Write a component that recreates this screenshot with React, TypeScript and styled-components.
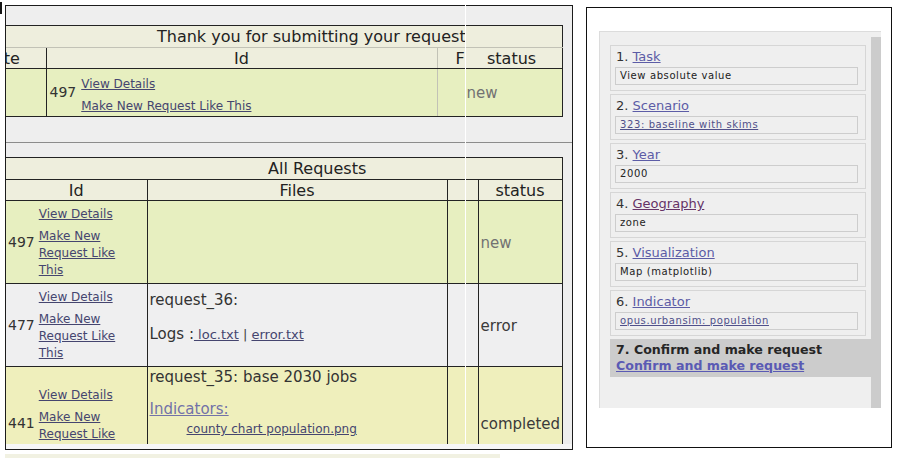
import React from "react";
import styled, { createGlobalStyle } from "styled-components";

const GlobalStyle = createGlobalStyle`
  html, body { margin: 0; padding: 0; background: #ffffff; }
  body { font-family: "DejaVu Sans", Verdana, sans-serif; color: #222222; }
  #root { width: 904px; height: 461px; overflow: hidden; }
`;

type Tone = "dark" | "light" | "none";
const edge = (t: Tone = "dark") =>
  t === "none" ? "none" : `1px solid ${t === "dark" ? "#232323" : "#c2c2b6"}`;

const Page = styled.div`
  display: flex;
  align-items: flex-start;
`;

const CornerMark = styled.div`
  width: 2px;
  height: 12px;
  margin-top: 2px;
  background: #151515;
`;

const LeftColumn = styled.div`
  display: flex;
  flex-direction: column;
  margin-left: 3px;
  margin-top: 5px;
`;

const RequestsPanel = styled.div`
  position: relative;
  box-sizing: border-box;
  width: 568px;
  height: 445px;
  border: 1px solid #1c1c1c;
  background: #f6f6f6;
  padding-bottom: 5px;
`;

const Scroller = styled.div`
  box-sizing: border-box;
  height: 100%;
  overflow: hidden;
  background: #eeeeee;
  padding-top: 19px;
`;

const Seam = styled.div`
  position: absolute;
  top: -6px;
  bottom: 5px;
  left: 459px;
  width: 1px;
  background: #ffffff;
`;

const Grid = styled.table<{ $w: number; $shift?: number }>`
  border-collapse: collapse;
  table-layout: fixed;
  width: ${(p) => p.$w}px;
  margin-left: ${(p) => p.$shift ?? 0}px;
`;

const Col = styled.col<{ $w: number }>`
  width: ${(p) => p.$w}px;
`;

const TitleCell = styled.th<{ $indent: number; $under: Tone }>`
  box-sizing: border-box;
  height: 22px;
  padding: 0 0 0 ${(p) => p.$indent}px;
  background: #eeeedd;
  border-top: ${edge("dark")};
  border-right: ${edge("dark")};
  border-bottom: ${(p) => edge(p.$under)};
  font-size: 16px;
  font-weight: normal;
  line-height: 20px;
  text-align: left;
  white-space: nowrap;
  overflow: hidden;
  color: #222222;
`;

const HeadCell = styled.th<{ $right?: Tone; $align?: "left" | "center"; $indent?: number }>`
  box-sizing: border-box;
  height: 21px;
  padding: 0 0 0 ${(p) => p.$indent ?? 0}px;
  background: #eeeedd;
  border-right: ${(p) => edge(p.$right)};
  border-bottom: ${edge("dark")};
  font-size: 16px;
  font-weight: normal;
  line-height: 19px;
  text-align: ${(p) => p.$align ?? "center"};
  white-space: nowrap;
  overflow: hidden;
  color: #222222;
`;

const BodyCell = styled.td<{
  $bg: string;
  $right?: Tone;
  $h: number;
  $valign?: "top" | "middle";
  $pl?: number;
  $pt?: number;
}>`
  box-sizing: border-box;
  height: ${(p) => p.$h}px;
  padding: ${(p) => p.$pt ?? 0}px 0 0 ${(p) => p.$pl ?? 0}px;
  background: ${(p) => p.$bg};
  border-right: ${(p) => edge(p.$right)};
  border-bottom: ${edge("dark")};
  vertical-align: ${(p) => p.$valign ?? "middle"};
  color: #333333;
  overflow: hidden;
`;

const IdWrap = styled.div<{ $gap: number }>`
  display: flex;
  align-items: center;
  gap: ${(p) => p.$gap}px;
`;

const IdNumber = styled.span`
  font-size: 14px;
  line-height: 17px;
  color: #333333;
`;

const LinkStack = styled.div<{ $w?: number; $offset?: number }>`
  display: flex;
  flex-direction: column;
  align-items: flex-start;
  width: ${(p) => (p.$w ? `${p.$w}px` : "auto")};
  margin-top: ${(p) => p.$offset ?? 0}px;
  font-size: 12px;
  line-height: 17px;
`;

const ActionLink = styled.a<{ $lead?: boolean }>`
  color: #45456f;
  text-decoration: underline;
  cursor: pointer;
  margin-bottom: ${(p) => (p.$lead ? 5 : 0)}px;
`;

const StatusText = styled.span<{ $muted?: boolean }>`
  font-size: 15px;
  line-height: 18px;
  color: ${(p) => (p.$muted ? "#727272" : "#3a3a3a")};
`;

const FileLine = styled.div<{ $gap?: number }>`
  font-size: 15px;
  line-height: 18px;
  color: #333333;
  margin-top: ${(p) => p.$gap ?? 0}px;
  white-space: nowrap;
`;

const FileLink = styled.a`
  font-size: 13px;
  color: #45456f;
  text-decoration: underline;
  cursor: pointer;
`;

const Separator = styled.span`
  font-size: 13px;
  color: #444444;
`;

const IndicatorLabel = styled.a`
  font-size: 15px;
  color: #7272a8;
  text-decoration: underline;
  cursor: pointer;
`;

const IndicatorFile = styled.a`
  display: block;
  margin-left: 37px;
  margin-top: 4px;
  font-size: 12px;
  line-height: 15px;
  color: #45456f;
  text-decoration: underline;
  cursor: pointer;
`;

const Rule = styled.div`
  height: 1px;
  background: #8c8c8c;
  margin: 25px 0 14px;
`;

const FooterStrip = styled.div`
  width: 495px;
  height: 4px;
  margin-top: 4px;
  background: #f1f1e2;
`;

/* ---------- right panel ---------- */

const WizardBox = styled.div`
  box-sizing: border-box;
  width: 306px;
  height: 441px;
  margin-left: 13px;
  margin-top: 7px;
  border: 1px solid #111111;
  background: #ffffff;
  padding: 23px 0 0 12px;
`;

const Wizard = styled.div`
  box-sizing: border-box;
  width: 282px;
  height: 377px;
  display: flex;
  align-items: stretch;
  padding-left: 10px;
  background: #efefef;
  border-top: 1px solid #dcdcdc;
  border-left: 1px solid #dcdcdc;
`;

const Steps = styled.div`
  width: 261px;
  padding-top: 13px;
  display: flex;
  flex-direction: column;
  gap: 3px;
`;

const ShadowBar = styled.div`
  width: 10px;
  margin-top: 5px;
  background: #cccccc;
`;

const Step = styled.div`
  box-sizing: border-box;
  width: 256px;
  height: 46px;
  padding: 3px 7px 5px 4px;
  border: 1px solid #d6d6d6;
  background: #efefef;
`;

const StepTitle = styled.div`
  padding-left: 1px;
  margin-bottom: 2px;
  font-size: 13px;
  line-height: 16px;
  color: #333333;
  white-space: nowrap;
`;

const StepLink = styled.a<{ $visited?: boolean }>`
  color: ${(p) => (p.$visited ? "#663366" : "#5c5ca6")};
  text-decoration: underline;
  cursor: pointer;
`;

const StepValue = styled.div`
  box-sizing: border-box;
  height: 18px;
  padding-left: 4px;
  border: 1px solid #cdcdcd;
  background: #efefef;
  font-size: 10px;
  line-height: 16px;
  letter-spacing: 0.6px;
  color: #222222;
  white-space: nowrap;
  overflow: hidden;
`;

const ValueLink = styled.a`
  color: #50508a;
  text-decoration: underline;
  cursor: pointer;
`;

const ConfirmBlock = styled.div`
  box-sizing: border-box;
  width: 261px;
  padding: 3px 6px;
  background: #cccccc;
  font-size: 12.6px;
  font-weight: bold;
  line-height: 16px;
  color: #262626;
  white-space: nowrap;
`;

const ConfirmLink = styled.a`
  display: block;
  color: #5a5ab4;
  text-decoration: underline;
  cursor: pointer;
`;

type StepData = { n: number; label: string; value: string; valueIsLink?: boolean; visited?: boolean };

const steps: StepData[] = [
  { n: 1, label: "Task", value: "View absolute value" },
  { n: 2, label: "Scenario", value: "323: baseline with skims", valueIsLink: true },
  { n: 3, label: "Year", value: "2000" },
  { n: 4, label: "Geography", value: "zone", visited: true },
  { n: 5, label: "Visualization", value: "Map (matplotlib)" },
  { n: 6, label: "Indicator", value: "opus.urbansim: population", valueIsLink: true },
];

const GREEN = "#e7efc0";
const GRAY = "#efeff0";
const YELLOW = "#efefbc";

const RequestLinks: React.FC<{ width?: number; offset?: number }> = ({ width, offset }) => (
  <LinkStack $w={width} $offset={offset}>
    <ActionLink $lead>View Details</ActionLink>
    <ActionLink>Make New Request Like This</ActionLink>
  </LinkStack>
);

export default function App() {
  return (
    <>
      <GlobalStyle />
      <Page>
        <CornerMark />
        <LeftColumn>
          <RequestsPanel>
            <Scroller>
              <Grid $w={606} $shift={-50}>
                <colgroup>
                  <Col $w={90} />
                  <Col $w={391} />
                  <Col $w={43} />
                  <Col $w={82} />
                </colgroup>
                <thead>
                  <tr>
                    <TitleCell colSpan={4} $indent={201} $under="light">
                      Thank you for submitting your request
                    </TitleCell>
                  </tr>
                  <tr>
                    <HeadCell>Date</HeadCell>
                    <HeadCell $right="light">Id</HeadCell>
                    <HeadCell $right="none" $align="left" $indent={18}>
                      F
                    </HeadCell>
                    <HeadCell $align="left" $indent={7}>
                      status
                    </HeadCell>
                  </tr>
                </thead>
                <tbody>
                  <tr>
                    <BodyCell $bg={GREEN} $h={48} />
                    <BodyCell $bg={GREEN} $h={48} $right="light" $pl={3}>
                      <IdWrap $gap={5}>
                        <IdNumber>497</IdNumber>
                        <RequestLinks offset={5} />
                      </IdWrap>
                    </BodyCell>
                    <BodyCell $bg={GREEN} $h={48} colSpan={2} $pl={29}>
                      <StatusText $muted>new</StatusText>
                    </BodyCell>
                  </tr>
                </tbody>
              </Grid>

              <Rule />

              <Grid $w={556}>
                <colgroup>
                  <Col $w={141} />
                  <Col $w={300} />
                  <Col $w={31} />
                  <Col $w={84} />
                </colgroup>
                <thead>
                  <tr>
                    <TitleCell colSpan={4} $indent={262} $under="dark">
                      All Requests
                    </TitleCell>
                  </tr>
                  <tr>
                    <HeadCell>Id</HeadCell>
                    <HeadCell>Files</HeadCell>
                    <HeadCell />
                    <HeadCell>status</HeadCell>
                  </tr>
                </thead>
                <tbody>
                  <tr>
                    <BodyCell $bg={GREEN} $h={83} $pl={2}>
                      <IdWrap $gap={4}>
                        <IdNumber>497</IdNumber>
                        <RequestLinks width={92} />
                      </IdWrap>
                    </BodyCell>
                    <BodyCell $bg={GREEN} $h={83} />
                    <BodyCell $bg={GREEN} $h={83} />
                    <BodyCell $bg={GREEN} $h={83} $pl={2}>
                      <StatusText $muted>new</StatusText>
                    </BodyCell>
                  </tr>
                  <tr>
                    <BodyCell $bg={GRAY} $h={83} $pl={2}>
                      <IdWrap $gap={4}>
                        <IdNumber>477</IdNumber>
                        <RequestLinks width={92} />
                      </IdWrap>
                    </BodyCell>
                    <BodyCell $bg={GRAY} $h={83} $valign="top" $pt={7} $pl={2}>
                      <FileLine>request_36:</FileLine>
                      <FileLine $gap={16}>
                        Logs :<FileLink> loc.txt</FileLink>
                        <Separator> | </Separator>
                        <FileLink>error.txt</FileLink>
                      </FileLine>
                    </BodyCell>
                    <BodyCell $bg={GRAY} $h={83} />
                    <BodyCell $bg={GRAY} $h={83} $pl={2}>
                      <StatusText>error</StatusText>
                    </BodyCell>
                  </tr>
                  <tr>
                    <BodyCell $bg={YELLOW} $h={113} $pl={2}>
                      <IdWrap $gap={4}>
                        <IdNumber>441</IdNumber>
                        <RequestLinks width={92} />
                      </IdWrap>
                    </BodyCell>
                    <BodyCell $bg={YELLOW} $h={113} $valign="top" $pt={1} $pl={2}>
                      <FileLine>request_35: base 2030 jobs</FileLine>
                      <FileLine $gap={14}>
                        <IndicatorLabel>Indicators:</IndicatorLabel>
                      </FileLine>
                      <IndicatorFile>county chart population.png</IndicatorFile>
                    </BodyCell>
                    <BodyCell $bg={YELLOW} $h={113} />
                    <BodyCell $bg={YELLOW} $h={113} $pl={2}>
                      <StatusText>completed</StatusText>
                    </BodyCell>
                  </tr>
                </tbody>
              </Grid>
            </Scroller>
            <Seam />
          </RequestsPanel>
          <FooterStrip />
        </LeftColumn>

        <WizardBox>
          <Wizard>
            <Steps>
              {steps.map((s) => (
                <Step key={s.n}>
                  <StepTitle>
                    {s.n}. <StepLink $visited={s.visited}>{s.label}</StepLink>
                  </StepTitle>
                  <StepValue>
                    {s.valueIsLink ? <ValueLink>{s.value}</ValueLink> : s.value}
                  </StepValue>
                </Step>
              ))}
              <ConfirmBlock>
                7. Confirm and make request
                <ConfirmLink>Confirm and make request</ConfirmLink>
              </ConfirmBlock>
            </Steps>
            <ShadowBar />
          </Wizard>
        </WizardBox>
      </Page>
    </>
  );
}
